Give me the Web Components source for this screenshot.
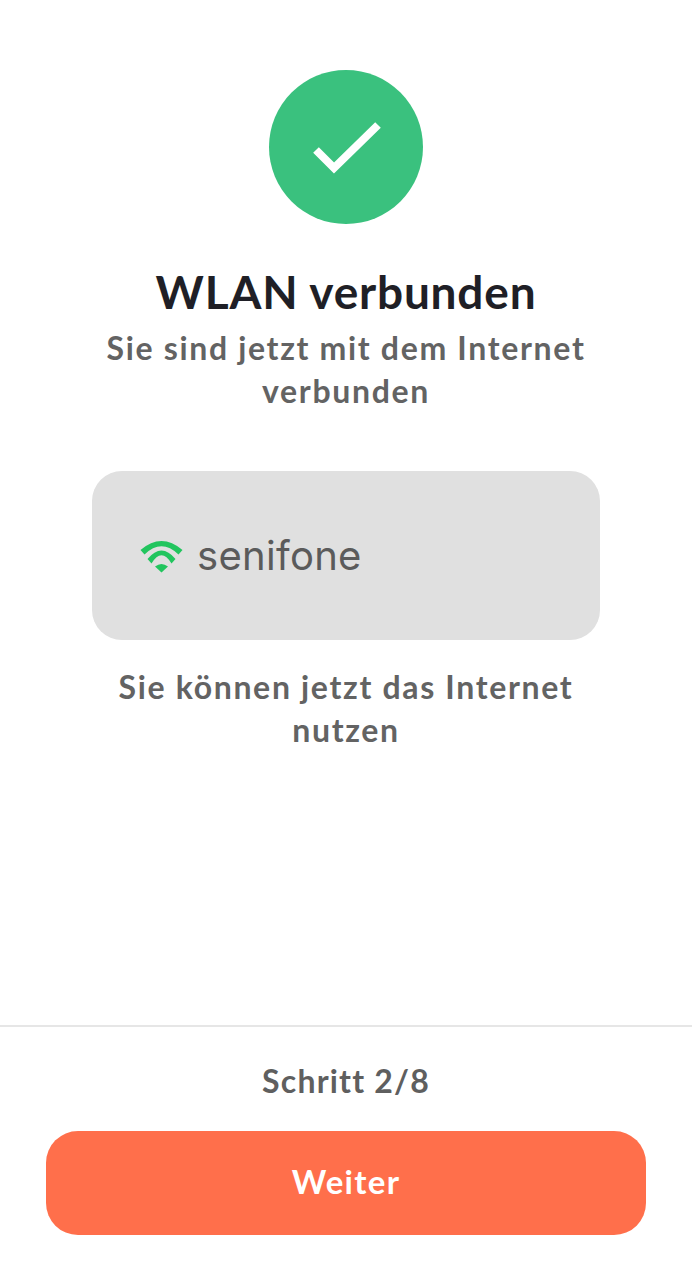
<!DOCTYPE html>
<html lang="de">
<head>
<meta charset="UTF-8">
<title>WLAN verbunden</title>
<style>
  html, body { margin: 0; height: 100%; background: #fff; }
  body { font-family: "Lato", "Noto Sans", sans-serif; }
</style>
<script>
  class StatusBadge extends HTMLElement {
    constructor() {
      super();
      this.attachShadow({ mode: "open" }).innerHTML = `
        <style>
          :host { display: flex; justify-content: center; }
          svg { display: block; width: 154px; height: 154px; }
        </style>
        <svg viewBox="0 0 154 154">
          <circle cx="77" cy="77" r="77" fill="#3ac17e"/>
          <path d="M47 80 L65 98 L109 55" fill="none" stroke="#fff" stroke-width="8"/>
        </svg>`;
    }
  }
  class WifiCard extends HTMLElement {
    constructor() {
      super();
      this.attachShadow({ mode: "open" }).innerHTML = `
        <style>
          :host { display: flex; align-items: center; gap: 13px; box-sizing: border-box;
                  width: 508px; height: 169px; padding-left: 48px; border-radius: 30px;
                  background: #e0e0e0; color: #5b5b5b;
                  font: 400 40px "Inter", sans-serif; letter-spacing: 0.3px; }
          svg { display: block; width: 44px; height: 34px; }
        </style>
        <svg viewBox="0 0 44 34" fill="#22c55e">
          <path d="M0.5 11 Q21.5 -7 42.5 11 L38.5 15.5 Q21.5 -1 4.5 15.5 Z"/>
          <path d="M7.5 20 Q21.5 3 35.5 20 L31.5 24.5 Q21.5 8 11.5 24.5 Z"/>
          <path d="M15 27.5 Q21.5 22.5 28 27.5 L21.5 33.5 Z"/>
        </svg>
        <slot></slot>`;
    }
  }
  class WizardFooter extends HTMLElement {
    constructor() {
      super();
      this.attachShadow({ mode: "open" }).innerHTML = `
        <style>
          :host { display: flex; flex-direction: column; align-items: center;
                  border-top: 2px solid #e6e6e6; padding-top: 33px; height: 255px;
                  box-sizing: border-box; }
          .step { font-size: 32px; font-weight: 700; line-height: 42px; letter-spacing: 1.2px; color: #5f5f5f; }
          button { margin-top: 29px; padding: 0 0 4px; width: 600px; height: 104px; border: 0; border-radius: 32px;
                   background: #ff6f4b; color: #fff; font: 700 33px "Lato", sans-serif; letter-spacing: 1.3px; }
        </style>
        <div class="step"><slot name="step"></slot></div>
        <button><slot name="action"></slot></button>`;
    }
  }
  class WizardScreen extends HTMLElement {
    constructor() {
      super();
      this.attachShadow({ mode: "open" }).innerHTML = `
        <style>
          :host { display: flex; flex-direction: column; height: 1280px; box-sizing: border-box;
                  padding-top: 70px; text-align: center; }
          main { flex: 1; display: flex; flex-direction: column; align-items: center; }
          ::slotted(h1) { margin: 37px 0 3px; font-size: 46px; line-height: 62px; font-weight: 700; letter-spacing: 0.8px; color: #1f1f26; }
          ::slotted(p) { margin: 0; width: 500px; font-size: 32px; line-height: 43px; font-weight: 700; letter-spacing: 1.67px; color: #636363; }
          ::slotted(wifi-card) { margin: 59px 0 25px; }
        </style>
        <main><slot></slot></main>
        <slot name="footer"></slot>`;
    }
  }
  customElements.define("status-badge", StatusBadge);
  customElements.define("wifi-card", WifiCard);
  customElements.define("wizard-footer", WizardFooter);
  customElements.define("wizard-screen", WizardScreen);
</script>
</head>
<body>
  <wizard-screen>
    <status-badge></status-badge>
    <h1>WLAN verbunden</h1>
    <p>Sie sind jetzt mit dem Internet verbunden</p>
    <wifi-card>senifone</wifi-card>
    <p>Sie können jetzt das Internet nutzen</p>
    <wizard-footer slot="footer">
      <span slot="step">Schritt 2/8</span>
      <span slot="action">Weiter</span>
    </wizard-footer>
  </wizard-screen>
</body>
</html>
